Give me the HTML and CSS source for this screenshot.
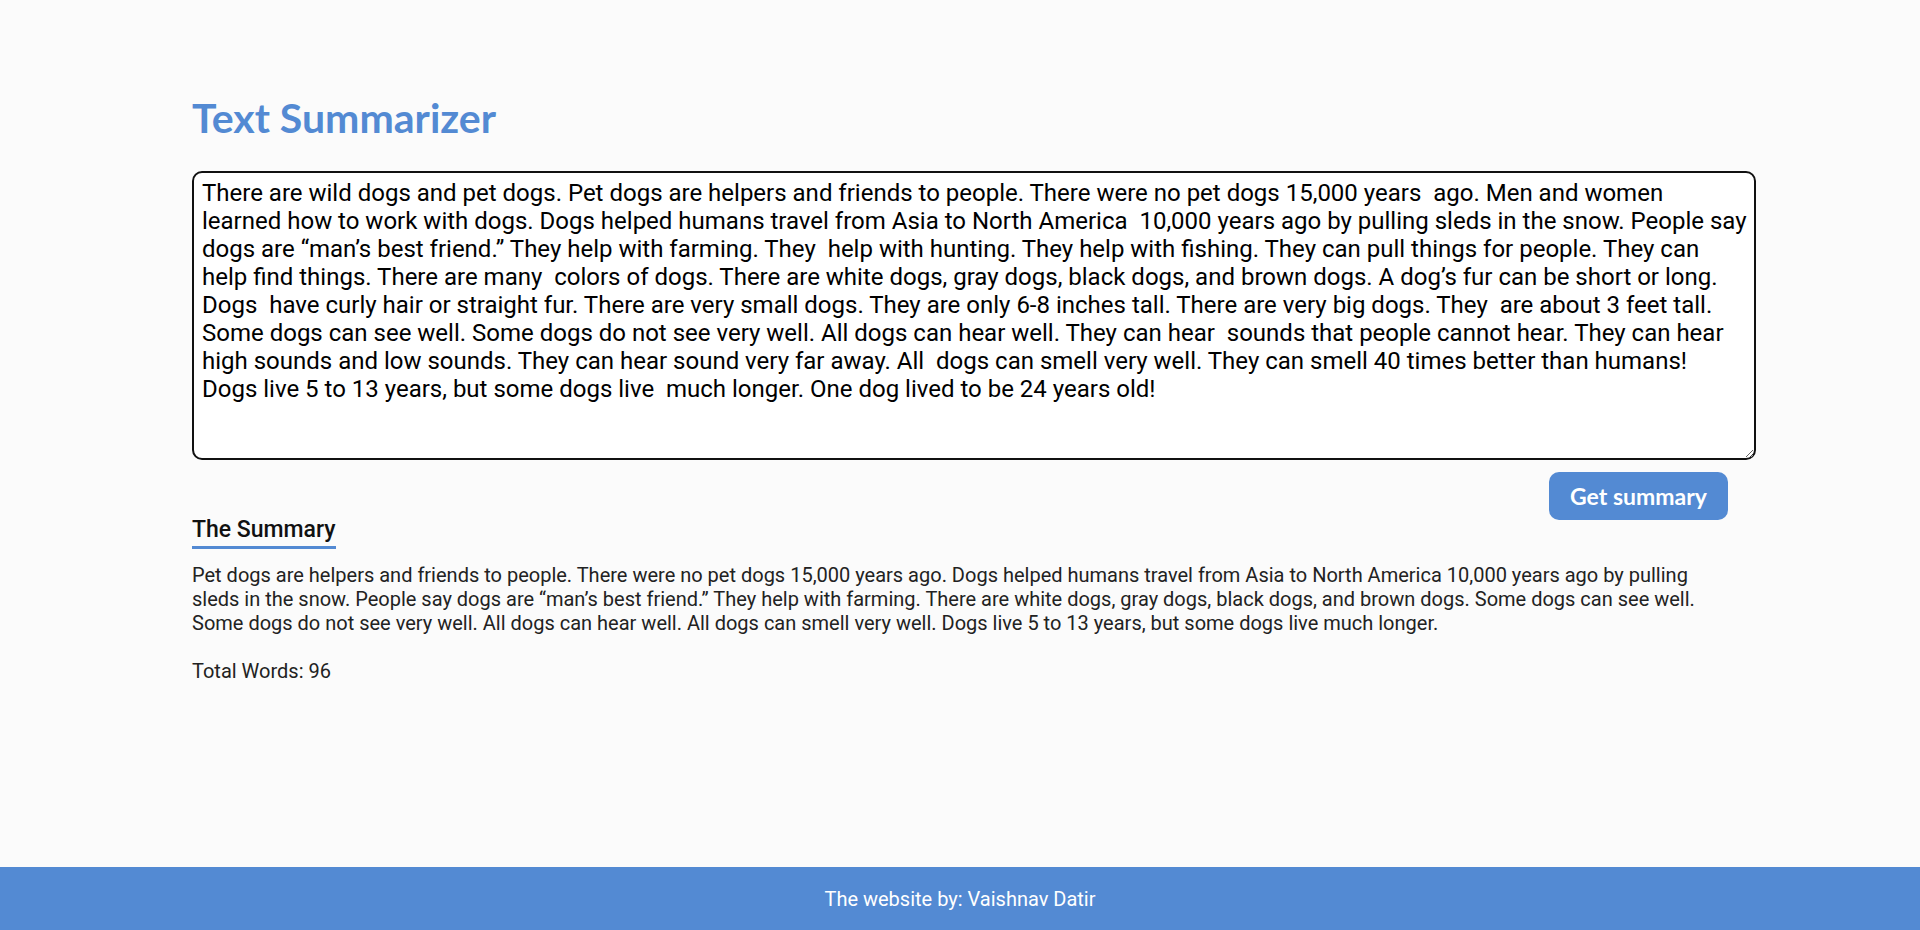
FILE: index.html
```html
<!DOCTYPE html>
<html lang="en">
<head>
<meta charset="utf-8">
<title>Text Summarizer</title>
<link rel="stylesheet" href="styles.css">
</head>
<body>
<main class="container">
  <h1 class="title">Text Summarizer</h1>
  <textarea class="input" spellcheck="false">There are wild dogs and pet dogs. Pet dogs are helpers and friends to people. There were no pet dogs 15,000 years  ago. Men and women
learned how to work with dogs. Dogs helped humans travel from Asia to North America  10,000 years ago by pulling sleds in the snow. People say
dogs are “man’s best friend.” They help with farming. They  help with hunting. They help with fishing. They can pull things for people. They can
help find things. There are many  colors of dogs. There are white dogs, gray dogs, black dogs, and brown dogs. A dog’s fur can be short or long.
Dogs  have curly hair or straight fur. There are very small dogs. They are only 6-8 inches tall. There are very big dogs. They  are about 3 feet tall.
Some dogs can see well. Some dogs do not see very well. All dogs can hear well. They can hear  sounds that people cannot hear. They can hear
high sounds and low sounds. They can hear sound very far away. All  dogs can smell very well. They can smell 40 times better than humans!
Dogs live 5 to 13 years, but some dogs live  much longer. One dog lived to be 24 years old!</textarea>
  <div class="actions">
    <button class="btn" type="button">Get summary</button>
  </div>
  <section class="summary">
    <h2 class="summary-title">The Summary</h2>
    <p class="summary-text">Pet dogs are helpers and friends to people. There were no pet dogs 15,000 years ago. Dogs helped humans travel from Asia to North America 10,000 years ago by pulling sleds in the snow. People say dogs are “man’s best friend.” They help with farming. There are white dogs, gray dogs, black dogs, and brown dogs. Some dogs can see well. Some dogs do not see very well. All dogs can hear well. All dogs can smell very well. Dogs live 5 to 13 years, but some dogs live much longer.</p>
    <p class="summary-count">Total Words: 96</p>
  </section>
</main>
<footer class="footer">The website by: Vaishnav Datir</footer>
</body>
</html>
```

FILE: styles.css
```css
* { box-sizing: border-box; }

html, body {
  margin: 0;
  padding: 0;
}

body {
  min-height: 100vh;
  display: flex;
  flex-direction: column;
  background: #fbfbfb;
  font-family: Roboto, "Liberation Sans", sans-serif;
  color: #111;
}

.container {
  width: 80%;
  margin: 0 auto;
  padding-top: 94px;
  flex: 1;
  display: flex;
  flex-direction: column;
}

.title {
  margin: 0;
  font-family: Lato, "Open Sans", sans-serif;
  font-weight: 700;
  font-size: 41px;
  line-height: 48px;
  color: #538ad3;
}

.input {
  display: block;
  margin-top: 29px;
  width: calc(100% + 28px);
  height: 289px;
  padding: 6px 4px 6px 8px;
  border: 2px solid #111;
  border-radius: 10px;
  background: #fff;
  color: #000;
  font-family: Roboto, "Liberation Sans", sans-serif;
  font-size: 24px;
  line-height: 28px;
  resize: vertical;
  outline: none;
}

.actions {
  display: flex;
  justify-content: flex-end;
  margin-top: 12px;
  height: 44px;
}

.btn {
  width: 179px;
  height: 48px;
  border: none;
  border-radius: 10px;
  background: #538ad3;
  color: #fff;
  font-family: Lato, "Open Sans", sans-serif;
  font-weight: 700;
  font-size: 23px;
  cursor: pointer;
}

.summary {
  display: flex;
  flex-direction: column;
  align-items: flex-start;
}

.summary-title {
  margin: 0;
  font-size: 23px;
  line-height: 28px;
  font-weight: 500;
  color: #111;
  border-bottom: 3px solid #538ad3;
  padding-bottom: 2px;
}

.summary-text,
.summary-count {
  margin: 0;
  font-size: 20px;
  line-height: 24px;
  color: #222;
}

.summary-text {
  margin-top: 14px;
}

.summary-count {
  margin-top: 24px;
}

.footer {
  height: 63px;
  background: #538ad3;
  color: #fff;
  font-size: 20px;
  display: flex;
  align-items: center;
  justify-content: center;
}
```
